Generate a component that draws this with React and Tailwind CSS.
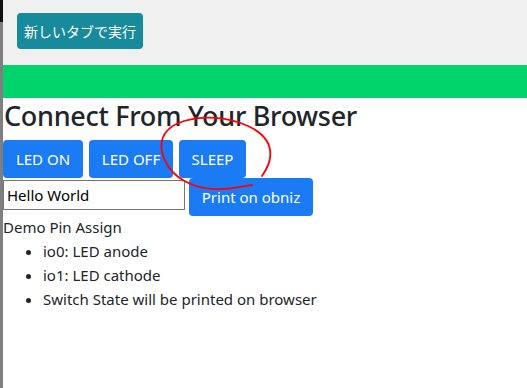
const items = ["io0: LED anode", "io1: LED cathode", "Switch State will be printed on browser"];

const BlueButton = ({ children, className = "" }) => (
    <button className={`h-[38px] whitespace-nowrap rounded-[4px] bg-[#1a7bf4] px-0 text-center text-[15px] text-white ${className}`}>
        {children}
    </button>
);

export default function App() {
    return (
        <div className="relative flex min-h-[388px] w-[527px] bg-white" style={{ fontFamily: '"Noto Sans", "Noto Sans CJK JP", sans-serif' }}>
            {/* window edge */}
            <div className="flex w-[3px] shrink-0 flex-col">
                <div className="h-[22px] bg-[#111]" />
                <div className="flex-1 bg-[#7f7f7f]" />
            </div>

            <div className="flex-1 text-[#212529]">
                <div className="h-[65px] bg-[#f0f0f0] pl-[14px] pt-[13px]">
                    <button className="h-[36px] w-[126px] rounded-[4px] bg-[#178a9c] text-[14px] text-white" style={{ fontFamily: '"Noto Sans CJK JP", sans-serif' }}>
                        新しいタブで実行
                    </button>
                </div>
                <div className="h-[33px] bg-[#00d46a]" />

                <h1 className="pl-[1px] text-[27px] font-medium leading-[36px] tracking-[-0.3px]">Connect From Your Browser</h1>

                <div className="mt-[6px] flex gap-[6px]">
                    <BlueButton className="w-[80px]">LED ON</BlueButton>
                    <BlueButton className="w-[84px]">LED OFF</BlueButton>
                    <BlueButton className="w-[67px]">SLEEP</BlueButton>
                </div>

                <div className="flex items-start gap-[4px]">
                    <input
                        defaultValue="Hello World"
                        className="mt-[2px] h-[30px] w-[182px] border border-[#767676] px-[3px] text-[15px] text-black outline-none"
                    />
                    <BlueButton className="h-[37px] w-[124px]">Print on obniz</BlueButton>
                </div>

                <div className="-mt-[1px] text-[15px] leading-[24px]">
                    <p>Demo Pin Assign</p>
                    <ul className="list-disc pl-[40px]">
                        {items.map((t) => (
                            <li key={t}>{t}</li>
                        ))}
                    </ul>
                </div>
            </div>

            {/* hand drawn annotation */}
            <svg className="pointer-events-none absolute left-0 top-0" width="527" height="388">
                <path
                    d="M252 185 C235 188 215 192 196 186 C178 180 166 168 162 152 C159 136 168 126 184 121 C204 115 228 117 248 126 C263 133 272 144 270 158 C269 166 265 171 262 176"
                    fill="none"
                    stroke="#ff0000"
                    strokeWidth="1.8"
                    strokeLinecap="round"
                />
            </svg>
        </div>
    );
}
